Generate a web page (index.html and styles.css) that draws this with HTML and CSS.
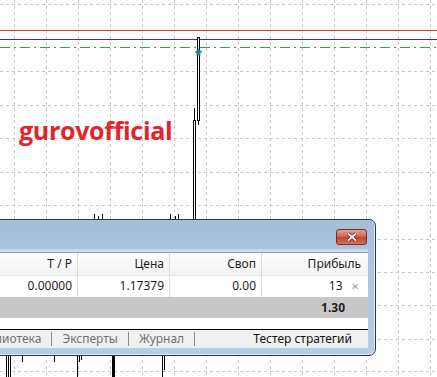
FILE: index.html
```html
<!DOCTYPE html>
<html lang="ru">
<head>
    <meta charset="UTF-8">
    <title>Терминал</title>
    <link rel="stylesheet" href="styles.css">
</head>
<body>
    <div class="chart">
        <svg class="plot" width="437" height="377" viewBox="0 0 437 377">
            <g class="grid">
                <line x1="14.5" y1="0" x2="14.5" y2="377"/>
                <line x1="46.5" y1="0" x2="46.5" y2="377"/>
                <line x1="78.5" y1="0" x2="78.5" y2="377"/>
                <line x1="110.5" y1="0" x2="110.5" y2="377"/>
                <line x1="142.5" y1="0" x2="142.5" y2="377"/>
                <line x1="174.5" y1="0" x2="174.5" y2="377"/>
                <line x1="206.5" y1="0" x2="206.5" y2="377"/>
                <line x1="238.5" y1="0" x2="238.5" y2="377"/>
                <line x1="270.5" y1="0" x2="270.5" y2="377"/>
                <line x1="302.5" y1="0" x2="302.5" y2="377"/>
                <line x1="334.5" y1="0" x2="334.5" y2="377"/>
                <line x1="366.5" y1="0" x2="366.5" y2="377"/>
                <line x1="398.5" y1="0" x2="398.5" y2="377"/>
                <line x1="430.5" y1="0" x2="430.5" y2="377"/>
                <line x1="0" y1="4.5" x2="437" y2="4.5"/>
                <line x1="0" y1="71.5" x2="437" y2="71.5"/>
                <line x1="0" y1="105.5" x2="437" y2="105.5"/>
                <line x1="0" y1="138.5" x2="437" y2="138.5"/>
                <line x1="0" y1="172.5" x2="437" y2="172.5"/>
                <line x1="0" y1="205.5" x2="437" y2="205.5"/>
                <line x1="0" y1="239.5" x2="437" y2="239.5"/>
                <line x1="0" y1="272.5" x2="437" y2="272.5"/>
                <line x1="0" y1="305.5" x2="437" y2="305.5"/>
                <line x1="0" y1="339.5" x2="437" y2="339.5"/>
                <line x1="0" y1="371.5" x2="437" y2="371.5"/>
            </g>
            <line class="level-sl" x1="0" y1="30.5" x2="437" y2="30.5"/>
            <line class="level-bid" x1="0" y1="39.5" x2="437" y2="39.5"/>
            <line class="level-open" x1="0" y1="47.5" x2="437" y2="47.5"/>

            <g class="candles">
                <line x1="198.5" y1="120" x2="198.5" y2="125"/>
                <rect x="197.5" y="37.5" width="2" height="83"/>
                <line x1="194.5" y1="108" x2="194.5" y2="121"/>
                <rect x="193.5" y="120.5" width="2" height="110"/>
                <line x1="94.5" y1="214" x2="94.5" y2="220"/>
                <line x1="98.5" y1="216" x2="98.5" y2="220"/>
                <line x1="102.5" y1="214" x2="102.5" y2="220"/>
                <line x1="170.5" y1="214" x2="170.5" y2="220"/>
                <line x1="175.5" y1="216" x2="175.5" y2="220"/>
                <line x1="178.5" y1="214" x2="178.5" y2="220"/>
                <line x1="6.5" y1="355" x2="6.5" y2="377"/>
                <line x1="8.5" y1="355" x2="8.5" y2="377"/>
                <line x1="10.5" y1="355" x2="10.5" y2="377"/>
                <line x1="22.5" y1="355" x2="22.5" y2="362"/>
                <line x1="54.5" y1="355" x2="54.5" y2="362"/>
                <line x1="77.5" y1="355" x2="77.5" y2="377"/>
                <line x1="79.5" y1="355" x2="79.5" y2="362"/>
                <line x1="81.5" y1="355" x2="81.5" y2="360"/>
                <line x1="113.5" y1="355" x2="113.5" y2="377" class="thick"/>
                <line x1="162.5" y1="355" x2="162.5" y2="377"/>
                <line x1="164.5" y1="355" x2="164.5" y2="370"/>
            </g>
            <path class="marker" d="M198.5 48.5 L202.5 52.5 L200.5 52.5 L200.5 55.5 L196.5 55.5 L196.5 52.5 L194.5 52.5 Z"/>
        </svg>

        <div class="watermark">gurovofficial</div>

        <div class="terminal">
            <div class="titlebar">
                <button class="close" type="button">
                    <svg width="12" height="10" viewBox="0 0 12 10">
                        <path d="M2 1.5 L10 8.5 M10 1.5 L2 8.5" class="x-shadow"/>
                        <path d="M2 1.5 L10 8.5 M10 1.5 L2 8.5" class="x-mark"/>
                    </svg>
                </button>
            </div>
            <div class="client">
                <div class="table">
                    <div class="row head">
                        <div class="cell">T / P</div>
                        <div class="cell">Цена</div>
                        <div class="cell">Своп</div>
                        <div class="cell last">Прибыль</div>
                    </div>
                    <div class="row data">
                        <div class="cell">0.00000</div>
                        <div class="cell">1.17379</div>
                        <div class="cell">0.00</div>
                        <div class="cell last profit"><span>13</span><span class="remove">×</span></div>
                    </div>
                    <div class="row total">
                        <div class="cell"></div>
                        <div class="cell"></div>
                        <div class="cell"></div>
                        <div class="cell last profit"><b>1.30</b></div>
                    </div>
                </div>
                <div class="tabs">
                    <span class="tab">Библиотека</span>
                    <span class="tab">Эксперты</span>
                    <span class="tab">Журнал</span>
                    <span class="tab active">Тестер стратегий</span>
                </div>
            </div>
        </div>
    </div>
</body>
</html>
```

FILE: styles.css
```css
* {
    margin: 0;
    padding: 0;
    box-sizing: border-box;
}

body {
    width: 437px;
    height: 377px;
    overflow: hidden;
    background: #fff;
    font-family: 'Noto Sans', 'Open Sans', sans-serif;
}

.chart {
    position: relative;
    width: 437px;
    height: 377px;
}

.plot {
    display: block;
}

.grid line {
    stroke: #c8c8c8;
    stroke-width: 1;
    stroke-dasharray: 3 3;
}

.level-sl {
    stroke: #c0463e;
    stroke-width: 1;
}

.level-bid {
    stroke: #2a2ad8;
    stroke-width: 1;
}

.level-open {
    stroke: #2aa838;
    stroke-width: 1;
    stroke-dasharray: 10 4 2 4;
}

.candles line {
    stroke: #000;
    stroke-width: 1;
}

.candles line.thick {
    stroke-width: 3;
}

.candles rect {
    fill: #fff;
    stroke: #000;
    stroke-width: 1;
}

.marker {
    fill: #2b78a8;
}

.watermark {
    position: absolute;
    left: 19px;
    top: 113px;
    font-family: 'Open Sans', sans-serif;
    font-weight: bold;
    font-size: 25px;
    letter-spacing: -0.3px;
    color: #e5232b;
}

/* окно терминала */
.terminal {
    position: absolute;
    left: -20px;
    top: 219px;
    width: 396px;
    height: 137px;
    display: flex;
    flex-direction: column;
    border: 1px solid #2e3a48;
    border-radius: 0 7px 7px 0;
    background: linear-gradient(#a5bfdb, #b7cee7);
    box-shadow: inset -1px 0 0 #dce8f5, inset 0 -1px 0 #dce8f5;
    padding: 0 7px 7px 7px;
}

.titlebar {
    height: 32px;
    display: flex;
    justify-content: flex-end;
    align-items: flex-start;
    padding-top: 9px;
    padding-right: 1px;
    border-bottom: 3px solid #c8dbef;
}

.close {
    width: 31px;
    height: 16px;
    border: 1px solid #7d2b22;
    border-radius: 3px;
    background: linear-gradient(#e4a08e, #d16b54 45%, #c2432c 55%, #d5735a);
    display: flex;
    align-items: center;
    justify-content: center;
}

.close svg {
    display: block;
}

.x-shadow {
    stroke: #5b1a12;
    stroke-width: 3.4;
}

.x-mark {
    stroke: #fff;
    stroke-width: 1.8;
}

.client {
    flex: 1;
    display: flex;
    flex-direction: column;
    background: #fff;
    border-top: 1px solid #a0a0a0;
    font-size: 12px;
    color: #1e1e1e;
}

.table {
    flex: 1;
}

.row {
    display: grid;
    grid-template-columns: 90px 92px 92px 1fr;
}

.cell {
    text-align: right;
    padding-right: 5px;
    border-right: 1px solid #dcdcdc;
    white-space: nowrap;
}

.cell.last {
    border-right: none;
    padding-right: 7px;
}

.head {
    height: 23px;
    line-height: 22px;
    background: linear-gradient(#ffffff, #f2f2f2);
    border-bottom: 1px solid #e6e6e6;
}

.data {
    height: 21px;
    line-height: 20px;
}

.total {
    height: 21px;
    line-height: 21px;
    background: #c8c8c8;
}

.total .cell {
    border-right: none;
}

.row .profit {
    display: flex;
    justify-content: flex-end;
    gap: 9px;
    padding-right: 9px;
}

.total .profit {
    padding-right: 23px;
}

.remove {
    color: #9a9a9a;
    font-size: 13px;
}

.total b {
    font-weight: bold;
}

.tabs {
    height: 19px;
    display: flex;
    align-items: center;
    background: #f0f0f0;
    border-top: 1px solid #000;
    margin-left: -25px;
    color: #707070;
}

.tab {
    padding: 0 10px;
    line-height: 14px;
    border-right: 1px solid #8a8a8a;
    white-space: nowrap;
}

.tab.active {
    margin-left: auto;
    border-right: none;
    padding-right: 16px;
    color: #111;
}
```
